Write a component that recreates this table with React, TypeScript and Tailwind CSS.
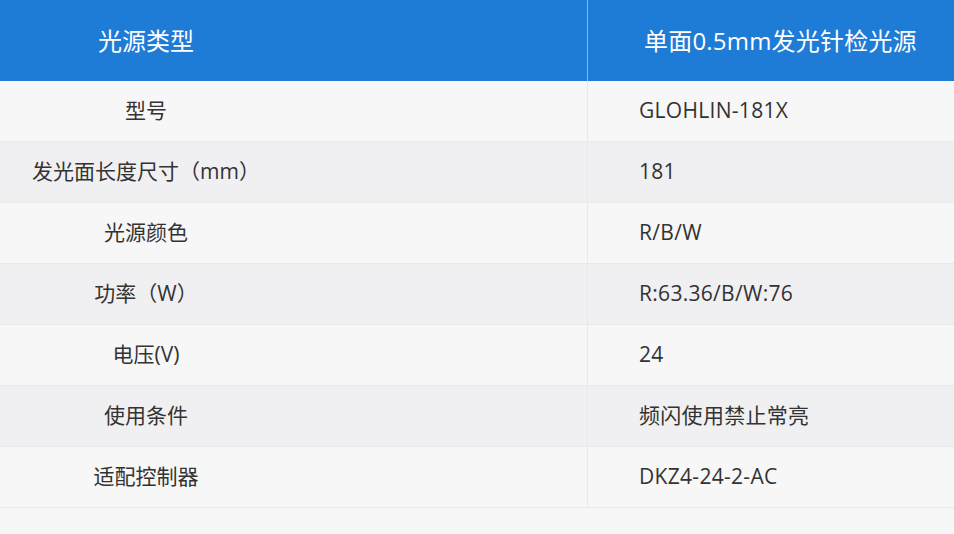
import React from 'react'

const rows = [
  { label: '型号', value: 'GLOHLIN-181X' },
  { label: '发光面长度尺寸（mm）', value: '181' },
  { label: '光源颜色', value: 'R/B/W' },
  { label: '功率（W）', value: 'R:63.36/B/W:76' },
  { label: '电压(V)', value: '24' },
  { label: '使用条件', value: '频闪使用禁止常亮' },
  { label: '适配控制器', value: 'DKZ4-24-2-AC' },
]

const App = () => {
  return (
    <div
      className="w-[954px] h-[534px] overflow-hidden bg-[#f7f7f7] text-[#333333]"
      style={{ fontFamily: '"Segoe UI", "Open Sans", "Noto Sans CJK SC", sans-serif' }}
    >
      <div className="flex h-[81px] bg-[#1e7bd6] text-white text-[24px]">
        <div className="w-[588px] flex items-center border-r border-[#8ab8e6]">
          <div className="w-[292px] text-center">光源类型</div>
        </div>
        <div className="flex-1 flex items-center pl-[56px] tracking-[0.2px]">单面0.5mm发光针检光源</div>
      </div>
      {rows.map((row, i) => (
        <div
          key={i}
          className={`flex h-[61px] border-b border-[#e9e9e9] text-[21px] ${i % 2 === 0 ? 'bg-[#f7f7f7]' : 'bg-[#f0f0f2]'}`}
        >
          <div className="w-[588px] flex items-center border-r border-[#e9e9e9]">
            <div className="w-[292px] text-center">{row.label}</div>
          </div>
          <div className="flex-1 flex items-center pl-[51px] tracking-[0.3px]">{row.value}</div>
        </div>
      ))}
    </div>
  )
}

export default App
